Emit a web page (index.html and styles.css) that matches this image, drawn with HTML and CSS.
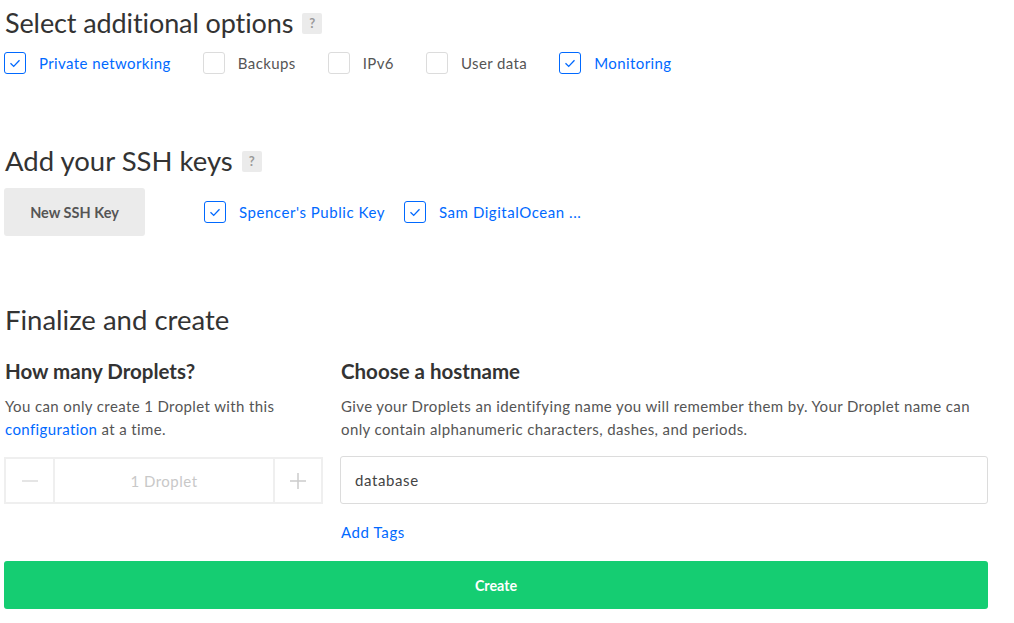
FILE: index.html
```html
<!DOCTYPE html>
<html>
<head>
<meta charset="utf-8">
<link rel="stylesheet" href="styles.css">
</head>
<body>
<div class="page">
  <section class="sec sec-options">
    <h2 class="title t1">Select additional options <span class="help">?</span></h2>
    <div class="checks">
      <label class="check on"><span class="box"><svg viewBox="0 0 22 22" width="22" height="22"><path d="M6.5 11.2l3.2 3.2 5.8-6.2" fill="none" stroke="#0069ff" stroke-width="1.3"/></svg></span>Private networking</label>
      <label class="check"><span class="box"></span>Backups</label>
      <label class="check"><span class="box"></span>IPv6</label>
      <label class="check"><span class="box"></span>User data</label>
      <label class="check on"><span class="box"><svg viewBox="0 0 22 22" width="22" height="22"><path d="M6.5 11.2l3.2 3.2 5.8-6.2" fill="none" stroke="#0069ff" stroke-width="1.3"/></svg></span>Monitoring</label>
    </div>
  </section>

  <section class="sec sec-ssh">
    <h2 class="title">Add your SSH keys <span class="help">?</span></h2>
    <div class="ssh-row">
      <button class="btn-gray">New SSH Key</button>
      <div class="checks ssh-checks">
        <label class="check on"><span class="box"><svg viewBox="0 0 22 22" width="22" height="22"><path d="M6.5 11.2l3.2 3.2 5.8-6.2" fill="none" stroke="#0069ff" stroke-width="1.3"/></svg></span>Spencer's Public Key</label>
        <label class="check on"><span class="box"><svg viewBox="0 0 22 22" width="22" height="22"><path d="M6.5 11.2l3.2 3.2 5.8-6.2" fill="none" stroke="#0069ff" stroke-width="1.3"/></svg></span>Sam DigitalOcean ...</label>
      </div>
    </div>
  </section>

  <section class="sec sec-final">
    <h2 class="title">Finalize and create</h2>
    <div class="cols">
      <div class="col col-left">
        <h3 class="sub">How many Droplets?</h3>
        <p class="desc">You can only create 1 Droplet with this <a class="link">configuration</a> at a time.</p>
        <div class="stepper">
          <span class="step-btn minus">
            <svg width="16" height="16" viewBox="0 0 16 16"><path d="M0 8h16" stroke="#ddd" stroke-width="1.5"/></svg>
          </span>
          <span class="step-val">1 Droplet</span>
          <span class="step-btn plus">
            <svg width="16" height="16" viewBox="0 0 16 16"><path d="M0 8h16M8 0v16" stroke="#ccc" stroke-width="1.5"/></svg>
          </span>
        </div>
      </div>
      <div class="col col-right">
        <h3 class="sub">Choose a hostname</h3>
        <p class="desc">Give your Droplets an identifying name you will remember them by. Your Droplet name can only contain alphanumeric characters, dashes, and periods.</p>
        <div class="input">database</div>
        <a class="link tags">Add Tags</a>
      </div>
    </div>
    <button class="btn-create">Create</button>
  </section>
</div>
</body>
</html>
```

FILE: styles.css
```css
* { box-sizing: border-box; }
html, body { margin: 0; padding: 0; background: #fff; }
body {
  font-family: "Lato", "Open Sans", sans-serif;
  color: #444;
}
.page {
  width: 984px;
  margin-left: 4px;
}
.title {
  margin: 0;
  font-weight: 400;
  font-size: 27.5px;
  line-height: 46px;
  color: #333;
  display: flex;
  align-items: center;
  padding-left: 1px;
}
.title.t1 { font-size: 27px; letter-spacing: -0.1px; }
.help {
  display: inline-flex;
  align-items: center;
  justify-content: center;
  width: 20px;
  height: 21px;
  margin-left: 9px;
  background: #ebebeb;
  border-radius: 2px;
  color: #999;
  font-size: 13px;
  font-weight: 700;
  line-height: 1;
  letter-spacing: 0;
}
.checks {
  display: flex;
  align-items: center;
  gap: 32px;
}
.check {
  display: flex;
  align-items: center;
  gap: 13px;
  font-size: 15px;
  letter-spacing: 0.4px;
  color: #555;
  height: 22px;
}
.check.on { color: #0069ff; }
.box {
  width: 22px;
  height: 22px;
  border: 1px solid #dcdcdc;
  border-radius: 3px;
  display: flex;
  align-items: center;
  justify-content: center;
  flex: none;
}
.box svg { display: block; margin: -1px; }
.check.on .box { border-color: #0069ff; }
.sec-options .checks { margin-top: 6px; }

.sec-ssh { margin-top: 64px; }
.ssh-row {
  display: flex;
  align-items: center;
  margin-top: 4px;
}
.btn-gray {
  width: 141px;
  height: 48px;
  border: none;
  border-radius: 3px;
  background: #ebebeb;
  color: #555;
  font-family: inherit;
  font-weight: 700;
  font-size: 14.5px;
  padding: 0;
}
.ssh-checks { margin-left: 59px; gap: 19px; }
.ssh-checks .check { letter-spacing: 0.55px; }

.sec-final { margin-top: 61px; }
.cols {
  display: flex;
  gap: 17px;
  margin-top: 16px;
}
.col-left { width: 319px; }
.col-right { flex: 1; }
.sub {
  margin: 0;
  font-size: 20.5px;
  font-weight: 700;
  line-height: 24px;
  color: #333;
  padding-left: 1px;
}
.desc {
  margin: 12px 0 0;
  font-size: 15px;
  letter-spacing: 0.38px;
  line-height: 23px;
  color: #555;
  padding-left: 1px;
}
.link { color: #0069ff; text-decoration: none; }
.stepper {
  margin-top: 16px;
  height: 47px;
  display: flex;
  border: 2px solid #efefef;
}
.step-btn {
  display: flex;
  align-items: center;
  justify-content: center;
  flex: none;
}
.step-btn.minus { width: 47px; }
.step-btn.plus { width: 46px; }
.step-val {
  flex: 1;
  display: flex;
  align-items: center;
  justify-content: center;
  border-left: 2px solid #efefef;
  border-right: 2px solid #efefef;
  color: #c8c8c8;
  font-size: 15px;
  letter-spacing: 0.5px;
}
.input {
  margin-top: 15px;
  height: 48px;
  border: 1px solid #dcdcdc;
  border-radius: 3px;
  display: flex;
  align-items: center;
  padding-left: 14px;
  font-size: 15px;
  letter-spacing: 0.6px;
  color: #444;
}
.tags {
  display: block;
  margin-top: 18px;
  font-size: 15px;
  letter-spacing: 0.6px;
  line-height: 20px;
  padding-left: 1px;
}
.btn-create {
  display: block;
  width: 984px;
  height: 48px;
  margin-top: 19px;
  border: none;
  border-radius: 3px;
  background: #15cd72;
  color: #fff;
  font-family: inherit;
  font-size: 14.3px;
  font-weight: 700;
}
```
